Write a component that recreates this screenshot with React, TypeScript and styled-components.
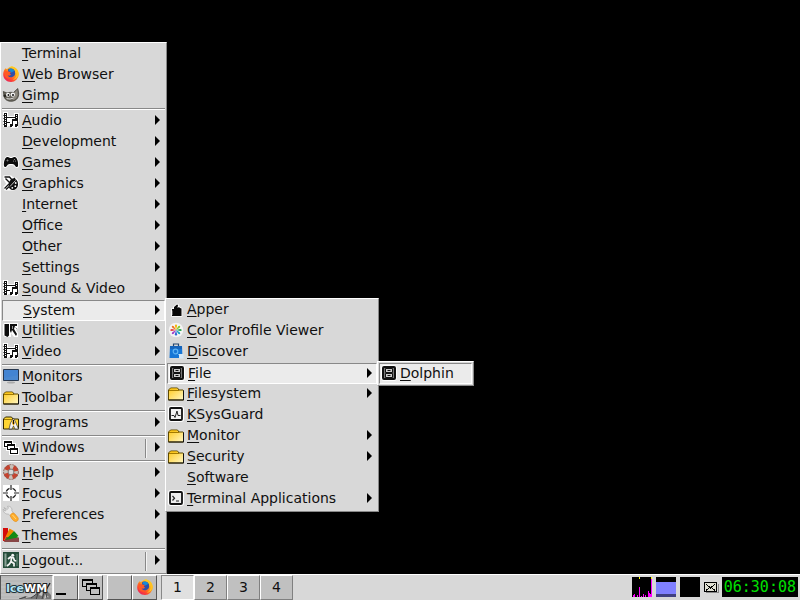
import React from "react";
import styled, { createGlobalStyle, css } from "styled-components";

const GlobalStyle = createGlobalStyle`
  *, *::before, *::after { box-sizing: border-box; }
  html, body { margin: 0; background: #000; }
  body, button { font-family: "DejaVu Sans", sans-serif; font-size: 14px; color: #101010; }
`;

/* ---------- layout ---------- */

const Desktop = styled.div`
  display: flex;
  flex-direction: column;
  height: 100vh;
  min-height: 560px;
  overflow: hidden;
  background: #000;
`;

const Workspace = styled.main`
  position: relative;
  flex: 1;
`;

const StartMenuLayer = styled.nav`
  position: absolute;
  left: 0;
  bottom: 0;
`;

const SubmenuLayer = styled.div`
  position: absolute;
  left: 100%;
  top: -2px;
  z-index: 1;
`;

/* ---------- menu parts ---------- */

const MenuPanel = styled.ul<{ $min: number }>`
  list-style: none;
  margin: 0;
  padding: 1px;
  min-width: ${(p) => p.$min}px;
  background: #d8d8d8;
  border: 1px solid;
  border-color: #fff #888 #888 #fff;
`;

const MenuEntry = styled.li`
  position: relative;
`;

const MenuButton = styled.button<{ $open?: boolean }>`
  display: flex;
  align-items: center;
  gap: 3px;
  width: 100%;
  height: 21px;
  margin: 0;
  padding: 0 5px 4px 1px;
  border: 0;
  background: transparent;
  line-height: 16px;
  text-align: left;
  white-space: nowrap;
  ${(p) =>
    p.$open &&
    css`
      padding: 0 4px 2px 1px;
      background: #ebebeb;
      border: 1px solid;
      border-color: #888 #fff #fff #888;
    `}
`;

const MenuLabel = styled.span`
  flex: 1;
`;

const Mnemonic = styled.span`
  text-decoration: underline;
  text-decoration-thickness: 1px;
  text-decoration-skip-ink: none;
  text-underline-offset: 2px;
`;

const MenuSeparator = styled.li`
  height: 4px;
  padding: 1px 0;
  &::before {
    content: "";
    display: block;
    height: 2px;
    border-top: 1px solid #888;
    border-bottom: 1px solid #fff;
  }
`;

const SplitMark = styled.span`
  align-self: flex-start;
  width: 2px;
  height: 19px;
  margin: 1px 5px 0 0;
  border-left: 1px solid #888;
  border-right: 1px solid #f4f4f4;
`;

const IconSvg = styled.svg`
  display: block;
  flex: none;
  overflow: visible;
`;

/* ---------- taskbar parts ---------- */

const Taskbar = styled.footer`
  display: flex;
  align-items: stretch;
  height: 26px;
  padding: 0 2px 0 0;
  background: #d8d8d8;
  border-top: 1px solid #fff;
`;

const StartButton = styled.button`
  width: 53px;
  padding: 0;
  border: 1px solid;
  border-color: #777 #f4f4f4 #aaa #555;
  background: #b9b9b9;
  overflow: hidden;
`;

const TaskButton = styled.button<{ $gapBefore?: boolean }>`
  display: flex;
  align-items: center;
  justify-content: center;
  width: 25px;
  padding: 0 0 1px;
  margin-left: ${(p) => (p.$gapBefore ? 4 : 0)}px;
  background: #c0c0c0;
  border: 1px solid;
  border-color: #fff #555 #555 #fff;
`;

const Pager = styled.div`
  display: flex;
  margin-left: 4px;
`;

const PagerButton = styled.button<{ $active?: boolean }>`
  width: 33px;
  padding: 0 0 1px;
  border: 1px solid;
  background: ${(p) => (p.$active ? "#e0e0e0" : "#c0c0c0")};
  border-color: ${(p) => (p.$active ? "#888 #fff #fff #888" : "#fff #808080 #808080 #fff")};
`;

const Tray = styled.div`
  display: flex;
  align-items: center;
  gap: 4px;
  margin-left: auto;
  padding-bottom: 1px;
`;

const Clock = styled.time`
  padding: 0 2px;
  background: #000;
  color: #00e000;
  font-family: "DejaVu Sans Mono", monospace;
  font-size: 15px;
  line-height: 20px;
`;

/* ---------- icons ---------- */

const Pixel = ({ children }: { children?: React.ReactNode }) => (
  <IconSvg width="16" height="16" viewBox="0 0 16 16" aria-hidden="true" shapeRendering="crispEdges">
    {children}
  </IconSvg>
);

const Smooth = ({ children }: { children?: React.ReactNode }) => (
  <IconSvg width="16" height="16" viewBox="0 0 16 16" aria-hidden="true">
    {children}
  </IconSvg>
);

const Firefox = () => (
  <Smooth>
    <defs>
      <linearGradient id="fox" x1="0.85" y1="0.1" x2="0.2" y2="0.95">
        <stop offset="0" stopColor="#ffe226" />
        <stop offset="0.4" stopColor="#ff9a1a" />
        <stop offset="0.75" stopColor="#ff4433" />
        <stop offset="1" stopColor="#e6245c" />
      </linearGradient>
    </defs>
    <path d="M1.600 3.600 2.600 2.200 4 3.300C5 1.800 7 .8 8.600.3c3.800.8 7.200 4 7.200 8.200A7.800 7.800 0 0 1 8 16C3.600 16 .2 12.700.2 8.500.2 6.500.8 4.800 1.600 3.600Z" fill="url(#fox)" />
    <path d="M5 3.400C7 1.800 10.500 2 11.800 5c1 2.600.2 5.600-3 6.200C6 11.700 4.400 10 4.400 8.300L5.200 5.800Z" fill="#2f4fa8" />
    <path d="M6.500 2.600c2-.7 4 .3 5 2.200L8.600 6.600 5.600 4.600Z" fill="#168bd8" />
    <path d="M1.800 4.200 5.200 5.400 8 6.100 6.700 7.600 8 8.600C7.400 10 5.200 9.800 4.400 9 4.600 11 6.400 12.300 8.500 12 5 14 1.600 11.600 1.400 8Z" fill="#ff5a24" />
    <path d="M8.400.3c2.800 1.700 4.300 4.100 4.100 7.200l1-1.200c.7 3.200-1 6.200-3.600 7.400 4.200-.6 6.200-4.200 5.600-7.300C14.700 3 12 1 8.400.3Z" fill="#ffc321" />
  </Smooth>
);

const Gimp = () => (
  <Smooth>
    <path d="M.3 4.500 4 6C6 5.200 8.600 5.200 10.500 5.500L14.800 1.500 15.700 6C16 10.500 13.500 13.800 8.800 14.300 4.600 14.500 1.500 12.500 1 9Z" fill="#66635a" stroke="#38362f" strokeWidth=".7" />
    <path d="M11 6 14.300 2.800 14.700 8C14 11 12 12.800 9.500 13.300Z" fill="#8d897f" />
    <circle cx="5" cy="7.800" r="2" fill="#f5f5f5" />
    <circle cx="9.800" cy="7.600" r="2.200" fill="#f5f5f5" />
    <circle cx="5.400" cy="8" r=".9" fill="#111" />
    <circle cx="10" cy="8" r="1" fill="#111" />
    <circle cx="1.800" cy="8.800" r="1.400" fill="#26251f" />
    <path d="M3.500 11.600Q7 12.800 10.500 11" fill="none" stroke="#ddd" strokeWidth="1" />
  </Smooth>
);

const Film = () => (
  <Pixel>
    <path d="M0 0h5v4h6V1h5v9h-1v6H8v-2H5v1H0Z" fill="#fff" />
    <path d="M1 1h3v14H1ZM12 2h3v5h-3ZM4 5h8v1H4ZM4 10h3v1H4Z" fill="#111" />
    <path d="M2 2h1v1H2ZM2 4h1v1H2ZM2 6h1v1H2ZM2 8h1v1H2ZM2 10h1v1H2ZM2 12h1v1H2ZM13 3h1v1h-1ZM13 5h1v1h-1Z" fill="#fff" />
    <path d="M9 7h6v7h-1v1h-2v-3h2V9h-4v5H9v1H7v-3h2Z" fill="#111" />
    <path d="M0 3h1v1H0ZM0 6h1v1H0ZM0 9h1v1H0ZM0 12h1v1H0Z" fill="#777" />
  </Pixel>
);

const Gamepad = () => (
  <Smooth>
    <path d="M4 3C6 2.500 6 4 8 4s2-1.500 4-1c2.500.8 3.500 6 3 9-.4 2-2.500 1-3.500-1C11 10 10 10 8 10s-3 0-3.500 1c-1 2-3.100 3-3.500 1C.5 9 1.500 3.800 4 3Z" fill="#0c0c0c" stroke="#fff" strokeWidth="1.800" paintOrder="stroke" />
    <path d="M3.500 6.500h2M4.500 5.500v2" stroke="#888" strokeWidth=".8" />
    <circle cx="11.500" cy="5.500" r=".6" fill="#999" />
    <circle cx="12.500" cy="7" r=".6" fill="#999" />
    <circle cx="10.500" cy="7" r=".6" fill="#999" />
  </Smooth>
);

const Palette = () => (
  <Smooth>
    <path d="M1 1h7l2 2c3-.5 5 2 5.300 5 .3 4-2.300 7-5.300 7H2L1 12l3-3-3-5Z" fill="#fff" stroke="#fff" strokeWidth="1.200" />
    <path d="M9.500 3.500c3-.5 5.500 2 5.500 5.500s-2 6-5 6c-2.500 0-4.500-2-4.300-5C6 7 7 4.500 9.500 3.500Z" fill="#111" />
    <path d="M1.500 2h5L10 6M2.500 3.500 7 8M1.500 13.500 12 3M3 14.500 8 10" stroke="#111" strokeWidth="1.300" fill="none" />
    <path d="M7 11.500 12.500 5.500" stroke="#eee" strokeWidth=".8" />
    <circle cx="12.700" cy="8" r=".9" fill="#fff" />
    <circle cx="12.300" cy="11.200" r=".9" fill="#fff" />
    <circle cx="9.300" cy="12.800" r=".9" fill="#fff" />
  </Smooth>
);

const Utilities = () => (
  <Smooth>
    <path d="M1 1h14v5l-2 2 2 3v4h-4L8 11v4H2L0 13V3Z" fill="#fff" />
    <path d="M1.500 2h4.500v11.500L4.500 15 1.500 13.500Z" fill="#0b0b0b" />
    <path d="M7 2h7v2h-2l-1 3 3 5-1 2-4-6-1 3-1-2Z" fill="#111" />
    <path d="M9.500 4v3M12.500 5.500 14 7" stroke="#999" />
  </Smooth>
);

const Monitor = () => (
  <Smooth>
    <ellipse cx="8" cy="14.500" rx="4" ry="1" fill="#aaa" />
    <path d="M6 12h4v2H6Z" fill="#c4c4c4" />
    <path d="M.5 1.500h15v11H.5Z" fill="#4a88d0" stroke="#27374e" />
    <path d="M1 2h14v5L1 10Z" fill="#4384d2" />
  </Smooth>
);

const Folder = () => (
  <Smooth>
    <defs>
      <linearGradient id="folder" x1="0" y1="0" x2="1" y2="1">
        <stop offset="0" stopColor="#ffc91c" />
        <stop offset="1" stopColor="#fff7c4" />
      </linearGradient>
    </defs>
    <path d="M.5 5 2.500 3h7l1.500 2h4l.5.500v9.500H.5Z" fill="url(#folder)" stroke="#5e4a00" />
    <path d="M15.500 5.500v9.500H.5" fill="none" stroke="#111" />
    <path d="M1 5.500h10" stroke="#a37a00" fill="none" />
    <path d="M3 3.600h6l.6 1H2Z" fill="#f5b800" />
  </Smooth>
);

const Programs = () => (
  <Smooth>
    <path d="M.5 5 2.500 3h6L10 5h5.500v10H.5Z" fill="#ffd634" stroke="#332a00" />
    <path d="M1 5.500h9" stroke="#a37a00" />
    <path d="M6 15 7.500 9 10.500 4 13 9l2.500 6H12l-1.500-3L9 15Z" fill="#f3f3f3" stroke="#333" strokeWidth=".7" />
    <path d="M10 5l2 4-1.500 3L9 9Z" fill="#e8a000" />
    <path d="M10.500 6v4" stroke="#111" />
  </Smooth>
);

const Cascade = () => (
  <Pixel>
    <path d="M0 1h10v3h3v4h3v8H6v-4H3V9H0Z" fill="#fff" />
    <path d="M1 2h8v3h3v4h3v6H7v-4H4V8H1ZM2 4v3h2V5h4V4ZM5 7v3h2V9h4V7ZM8 11v3h6v-3Z" fill="#080808" fillRule="evenodd" />
  </Pixel>
);

const Lifebuoy = () => (
  <Smooth>
    <circle cx="8" cy="8" r="5.300" fill="none" stroke="#c9c2ba" strokeWidth="4.600" />
    <circle cx="8" cy="8" r="5.300" fill="none" stroke="#c4432f" strokeWidth="4.400" strokeDasharray="4.700 3.625" strokeDashoffset="-1.800" />
    <circle cx="8" cy="8" r="7.400" fill="none" stroke="#8a5a50" strokeWidth=".9" strokeDasharray="2 1" />
    <circle cx="8" cy="8" r="2.900" fill="#d8d8d8" stroke="#756c66" strokeWidth=".9" />
  </Smooth>
);

const Focus = () => (
  <Smooth>
    <path d="M0 0h16v16H0Z" fill="#fff" />
    <circle cx="8" cy="8" r="4.800" fill="none" stroke="#222" strokeWidth="1.400" />
    <path d="M8 0v5M8 11v5M0 8h5M11 8h5" stroke="#fff" strokeWidth="3" />
    <path d="M8 0v5M8 11v5M0 8h5M11 8h5" stroke="#222" strokeWidth="1.200" />
  </Smooth>
);

const Wrench = () => (
  <Smooth>
    <path d="M1 1.500 4 3.500 5.500 2.200 4.500.3c3-.5 5 2 4.300 4.500L11 7.500 7.500 10 5.200 8C2.500 8.500 0 6 .2 3.200L2 5l1-.4Z" fill="#e9e9e9" stroke="#aaa" strokeWidth=".7" />
    <path d="M8.700 7.500c1-.7 2-.5 3 .3l3 3.500c1.500 2-.3 4.700-2.500 4.200C10 15 8 12 7.300 9.800 7.300 8.800 8 8 8.700 7.500Z" fill="#ffac2b" stroke="#dd8613" strokeWidth=".6" />
    <path d="M9.500 9 13 13" stroke="#ffd67a" strokeWidth="1" />
  </Smooth>
);

const Themes = () => (
  <Smooth>
    <path d="M0 1h5v13H0Z" fill="#d40c0c" />
    <path d="M1 13 6.500 1.500 11 4 5 14Z" fill="#ef8a00" />
    <path d="M2 14 11 4 15.500 9 6 14.500Z" fill="#128a15" />
    <path d="M3 10 16 10.500V15H1Z" fill="#874646" />
    <path d="M2 13 10 6 15 10.500Z" fill="#128a15" />
  </Smooth>
);

const Logout = () => (
  <Smooth>
    <path d="M0 0h16v16H0Z" fill="#254c3a" />
    <path d="M1.500 1.500h2v13h-2Z" fill="#8aa296" />
    <circle cx="9.700" cy="3.200" r="1.500" fill="#f5f5f5" />
    <path d="M5 7l2.500-2 3 1 1 2.500 2 .5M8.500 6 8 9.500l3 2v3M8 9.500 6.500 12 4 14" fill="none" stroke="#f5f5f5" strokeWidth="1.700" />
    <path d="M14 2v12" stroke="#6d8c7d" />
  </Smooth>
);

const Apper = () => (
  <Smooth>
    <path d="M4 8h2V6l3-2.500 1 .5-.5 3L11 6l1 1 1.500.5V15H4Z" fill="#080808" stroke="#fff" strokeWidth="1.600" paintOrder="stroke" />
    <path d="M4.500 9.500V14" stroke="#555" />
  </Smooth>
);

const ColorWheel = () => {
  const colors = ["#f4b400", "#8ac926", "#22a447", "#17a1c4", "#3264d6", "#a13cc9", "#e23a3a", "#f0741e"];
  return (
    <Smooth>
      <circle cx="8" cy="8" r="7.300" fill="#f4f4f4" />
      {colors.map((color, i) => (
        <path key={color} d="M8 8 6.900 3.800Q8 .6 9.100 3.800Z" fill={color} transform={`rotate(${i * 45} 8 8)`} />
      ))}
    </Smooth>
  );
};

const Discover = () => (
  <Smooth>
    <path d="M5.500 3.500V1h5v2.500" fill="none" stroke="#24466f" strokeWidth="1.200" />
    <path d="M2 3h12l.5 12h-13Z" fill="#1776d6" />
    <path d="M2 3h12v3H2Z" fill="#1765bb" />
    <circle cx="7.500" cy="8.500" r="2.300" fill="none" stroke="#5fb4f4" strokeWidth="1.200" />
    <path d="M9.500 10.500 11 12" stroke="#5fb4f4" />
    <path d="M11 11h4.500v4.500H11Z" fill="#d5e7f7" />
  </Smooth>
);

const Cabinet = () => (
  <Smooth>
    <rect x="1.500" y="1.500" width="13" height="13" rx="2" fill="#f2f2f2" stroke="#fff" strokeWidth="3" />
    <rect x="2" y="2" width="12" height="12" rx="1" fill="#777" stroke="#111" strokeWidth="2" />
    <path d="M4.500 3.500h7v4h-7ZM4.500 8.500h7v4h-7Z" fill="#ccc" stroke="#111" />
    <path d="M6.500 5.500h3M6.500 10.500h3" stroke="#111" />
  </Smooth>
);

const SysGuard = () => (
  <Smooth>
    <rect x="2" y="2" width="12" height="12" rx="1" fill="#f2f2f2" stroke="#fff" strokeWidth="4" />
    <rect x="2" y="2" width="12" height="12" rx="1" fill="#f2f2f2" stroke="#111" strokeWidth="1.800" />
    <path d="M3.500 9.500H6L7 11.500 9 5l1 4.500h2.500" fill="none" stroke="#222" />
  </Smooth>
);

const TerminalIcon = () => (
  <Smooth>
    <rect x="2" y="2" width="12" height="12" rx="1" fill="#eee" stroke="#fff" strokeWidth="4" />
    <rect x="2" y="2" width="12" height="12" rx="1" fill="#eee" stroke="#111" strokeWidth="1.800" />
    <path d="M4.500 6 6.500 8.200 4.500 10.500M8 11h3" fill="none" stroke="#222" strokeWidth="1.200" />
  </Smooth>
);

const Arrow = () => (
  <IconSvg width="5" height="10" viewBox="0 0 5 10" aria-hidden="true">
    <path d="M0 0 5 5 0 10Z" fill="#000" />
  </IconSvg>
);

const LogoText = styled.text`
  font-family: "DejaVu Sans", sans-serif;
  font-size: 11px;
  font-weight: bold;
  paint-order: stroke;
  stroke-width: 2px;
`;

const IceWmLogo = () => (
  <IconSvg width="51" height="24" viewBox="0 0 51 24" role="img" aria-label="IceWM">
    <path d="M0 3h51M0 7h51M0 11h51M0 15h51M0 19h51M0 23h51" stroke="#c5c5c5" />
    <path d="M16 24 24 20 28 21 34 15 38 17 43 9 46 15 50 19V24Z" fill="#777" />
    <path d="M20 23 28 20 36 14 34 20ZM38 19 43 10 41 20ZM44 18 48 21 43 23Z" fill="#c4c4c4" />
    <path d="M30 22 37 17 35 24M41 23 44 14 46 22M18 23 25 21" stroke="#444" fill="none" />
    <path d="M45 14 49 7" stroke="#222" strokeWidth="1.500" />
    <LogoText x="5" y="16">
      <tspan fill="#b8e4f4" stroke="#1c3038">Ice</tspan>
      <tspan fill="#fff" stroke="#222">WM</tspan>
    </LogoText>
  </IconSvg>
);

const ShowDesktop = () => (
  <IconSvg width="20" height="20" viewBox="0 0 20 20" aria-hidden="true" shapeRendering="crispEdges">
    <path d="M0 16h10v2H0Z" fill="#000" />
  </IconSvg>
);

const WindowList = () => (
  <IconSvg width="20" height="20" viewBox="0 0 20 20" aria-hidden="true" shapeRendering="crispEdges">
    <path d="M1.500 2.500h10v7h-10Z" fill="#c0c0c0" stroke="#000" />
    <path d="M1 3.500h11" stroke="#000" />
    <path d="M5.500 6.500h10v7h-10Z" fill="#c0c0c0" stroke="#000" />
    <path d="M5 7.500h11" stroke="#000" />
    <path d="M9.500 10.500h9v7h-9Z" fill="#c0c0c0" stroke="#000" />
    <path d="M9 11.500h10" stroke="#000" />
  </IconSvg>
);

const CpuGraph = () => (
  <IconSvg width="20" height="20" viewBox="0 0 20 20" role="img" aria-label="CPU load" shapeRendering="crispEdges">
    <path d="M0 0h20v20H0Z" fill="#000" />
    <path d="M1 20v-2h1v-1h1v3ZM5 20v-2h1v2ZM7 20V10h1v10ZM9 20v-1h1v1ZM11 20v-3h1v3ZM13 20v-2h1v2ZM16 20v-6h1v2h1v1h1V2h1v18Z" fill="#f0f" />
    <path d="M7 0h1v2H7ZM19 0h1v2h-1Z" fill="#ff0" />
  </IconSvg>
);

const MemoryGraph = () => (
  <IconSvg width="20" height="20" viewBox="0 0 20 20" role="img" aria-label="Memory use" shapeRendering="crispEdges">
    <path d="M0 0h20v20H0Z" fill="#000" />
    <path d="M0 5h20v12H0Z" fill="#8080ff" />
    <path d="M0 17h20v3H0Z" fill="#404080" />
  </IconSvg>
);

const NetGraph = () => (
  <IconSvg width="20" height="20" viewBox="0 0 20 20" role="img" aria-label="Network activity">
    <path d="M0 0h20v20H0Z" fill="#000" />
  </IconSvg>
);

const Mail = () => (
  <IconSvg width="14" height="12" viewBox="0 0 14 12" role="img" aria-label="Mailbox" shapeRendering="crispEdges">
    <path d="M2 11.500h12V3" stroke="#888" fill="none" />
    <path d="M.5 1.500h12v9H.5Z" fill="#e0e0d4" stroke="#000" />
    <path d="M2 3 6.500 7 11 3M2 9.500 5 7M11 9.500 8 7" stroke="#000" fill="none" />
  </IconSvg>
);

/* ---------- menu data ---------- */

type Item = {
  label: string;
  icon?: React.ReactNode;
  arrow?: boolean;
  split?: boolean;
  active?: boolean;
  submenu?: { width: number; groups: Item[][] };
};

const fileMenu: Item[][] = [[{ label: "Dolphin", icon: <Cabinet />, active: true }]];

const systemMenu: Item[][] = [
  [
    { label: "Apper", icon: <Apper /> },
    { label: "Color Profile Viewer", icon: <ColorWheel /> },
    { label: "Discover", icon: <Discover /> },
    { label: "File", icon: <Cabinet />, arrow: true, active: true, submenu: { width: 97, groups: fileMenu } },
    { label: "Filesystem", icon: <Folder />, arrow: true },
    { label: "KSysGuard", icon: <SysGuard /> },
    { label: "Monitor", icon: <Folder />, arrow: true },
    { label: "Security", icon: <Folder />, arrow: true },
    { label: "Software" },
    { label: "Terminal Applications", icon: <TerminalIcon />, arrow: true },
  ],
];

const rootMenu: Item[][] = [
  [{ label: "Terminal" }, { label: "Web Browser", icon: <Firefox /> }, { label: "Gimp", icon: <Gimp /> }],
  [
    { label: "Audio", icon: <Film />, arrow: true },
    { label: "Development", arrow: true },
    { label: "Games", icon: <Gamepad />, arrow: true },
    { label: "Graphics", icon: <Palette />, arrow: true },
    { label: "Internet", arrow: true },
    { label: "Office", arrow: true },
    { label: "Other", arrow: true },
    { label: "Settings", arrow: true },
    { label: "Sound & Video", icon: <Film />, arrow: true },
    { label: "System", arrow: true, active: true, submenu: { width: 214, groups: systemMenu } },
    { label: "Utilities", icon: <Utilities />, arrow: true },
    { label: "Video", icon: <Film />, arrow: true },
  ],
  [
    { label: "Monitors", icon: <Monitor />, arrow: true },
    { label: "Toolbar", icon: <Folder />, arrow: true },
  ],
  [{ label: "Programs", icon: <Programs />, arrow: true }],
  [{ label: "Windows", icon: <Cascade />, arrow: true, split: true }],
  [
    { label: "Help", icon: <Lifebuoy />, arrow: true },
    { label: "Focus", icon: <Focus />, arrow: true },
    { label: "Preferences", icon: <Wrench />, arrow: true },
    { label: "Themes", icon: <Themes />, arrow: true },
  ],
  [{ label: "Logout...", icon: <Logout />, arrow: true, split: true }],
];

function Menu({ groups, width }: { groups: Item[][]; width: number }) {
  return (
    <MenuPanel $min={width}>
      {groups.map((group, g) => (
        <React.Fragment key={g}>
          {g > 0 && <MenuSeparator role="separator" />}
          {group.map((item) => (
            <MenuEntry key={item.label}>
              <MenuButton type="button" $open={item.active} aria-haspopup={item.arrow ? "menu" : undefined}>
                {item.icon ?? <Pixel />}
                <MenuLabel>
                  <Mnemonic>{item.label[0]}</Mnemonic>
                  {item.label.slice(1)}
                </MenuLabel>
                {item.split && <SplitMark />}
                {item.arrow && <Arrow />}
              </MenuButton>
              {item.submenu && (
                <SubmenuLayer>
                  <Menu groups={item.submenu.groups} width={item.submenu.width} />
                </SubmenuLayer>
              )}
            </MenuEntry>
          ))}
        </React.Fragment>
      ))}
    </MenuPanel>
  );
}

export default function App() {
  return (
    <Desktop>
      <GlobalStyle />
      <Workspace>
        <StartMenuLayer aria-label="Start menu">
          <Menu groups={rootMenu} width={167} />
        </StartMenuLayer>
      </Workspace>
      <Taskbar>
        <StartButton type="button">
          <IceWmLogo />
        </StartButton>
        <TaskButton type="button" aria-label="Show desktop">
          <ShowDesktop />
        </TaskButton>
        <TaskButton type="button" aria-label="Window list">
          <WindowList />
        </TaskButton>
        <TaskButton type="button" aria-label="Terminal" $gapBefore />
        <TaskButton type="button" aria-label="Web browser">
          <Firefox />
        </TaskButton>
        <Pager>
          {["1", "2", "3", "4"].map((name) => (
            <PagerButton key={name} type="button" $active={name === "1"}>
              {name}
            </PagerButton>
          ))}
        </Pager>
        <Tray>
          <CpuGraph />
          <MemoryGraph />
          <NetGraph />
          <Mail />
          <Clock>06:30:08</Clock>
        </Tray>
      </Taskbar>
    </Desktop>
  );
}
